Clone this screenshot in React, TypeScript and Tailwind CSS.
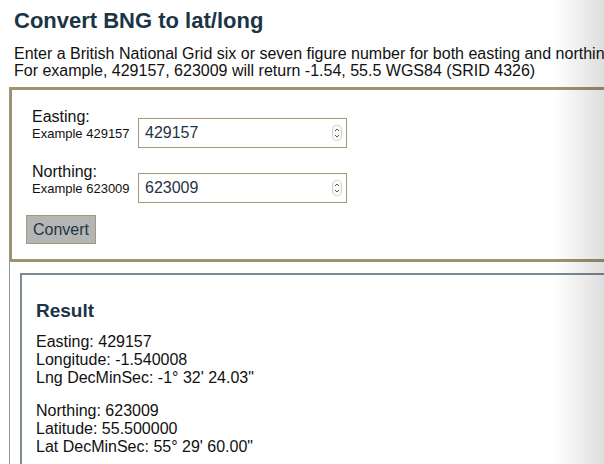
import { useState } from "react";

function Spinner() {
  return (
    <svg width="10" height="17" viewBox="0 0 10 17" className="absolute right-[5px] top-1/2 -translate-y-1/2">
      <rect x="0.5" y="0.5" width="9" height="16" rx="4.5" fill="#fafafa" stroke="#cfcfcf" />
      <path d="M3 6.5 L5 4.5 L7 6.5" fill="none" stroke="#555" strokeWidth="1" />
      <path d="M3 10.5 L5 12.5 L7 10.5" fill="none" stroke="#555" strokeWidth="1" />
    </svg>
  );
}

interface FieldProps {
  label: string;
  example: string;
  value: string;
  onChange: (v: string) => void;
}

function Field({ label, example, value, onChange }: FieldProps) {
  return (
    <div className="flex items-end pl-[6px]">
      <div className="pb-[6px] w-[106px]">
        <div className="text-[16px] leading-[18px]">{label}</div>
        <div className="text-[13px] leading-[16px]">{example}</div>
      </div>
      <div className="relative">
        <input
          type="text"
          value={value}
          onChange={(e) => onChange(e.target.value)}
          className="w-[209px] h-[30px] border border-[#a39a7a] pl-[6px] text-[16px] text-[#1f3543] outline-none"
        />
        <Spinner />
      </div>
    </div>
  );
}

export default function App() {
  const [easting, setEasting] = useState("429157");
  const [northing, setNorthing] = useState("623009");

  return (
    <div className="relative w-[604px] h-[464px] overflow-hidden bg-white text-[#111] font-['Liberation_Sans',Arial,sans-serif]">
      <div className="w-[760px]">
        <h1 className="pl-[14px] pt-[8px] text-[22px] leading-[26px] font-bold text-[#1b3545]">
          Convert BNG to lat/long
        </h1>
        <p className="pl-[14px] mt-[11px] text-[16px] leading-[17px] whitespace-nowrap">
          Enter a British National Grid six or seven figure number for both easting and northing.
          <br />
          For example, 429157, 623009 will return -1.54, 55.5 WGS84 (SRID 4326)
        </p>

        <form
          onSubmit={(e) => e.preventDefault()}
          className="ml-[9px] mt-[8px] border-[3px] border-[#9d9272] pl-[14px] pt-[18px] pb-[15px]"
        >
          <Field label="Easting:" example="Example 429157" value={easting} onChange={setEasting} />
          <div className="mt-[15px]">
            <Field label="Northing:" example="Example 623009" value={northing} onChange={setNorthing} />
          </div>
          <button
            type="submit"
            className="mt-[12px] h-[29px] px-[6px] bg-[#b5b5b5] border border-[#a39a7a] text-[16px] text-[#1f3543]"
          >
            Convert
          </button>
        </form>

        <div className="ml-[9px] border-l border-[#8a969c] pl-[10px] pt-[11px] h-[240px]">
          <div className="border-2 border-[#7d8a92] pl-[14px] pt-[25px] h-[220px]">
            <h2 className="text-[19px] leading-[22px] font-bold text-[#1b3545]">Result</h2>
            <div className="mt-[11px] text-[16px] leading-[18px]">
              <div>Easting: 429157</div>
              <div>Longitude: -1.540008</div>
              <div>Lng DecMinSec: -1° 32' 24.03"</div>
            </div>
            <div className="mt-[15px] text-[16px] leading-[18px]">
              <div>Northing: 623009</div>
              <div>Latitude: 55.500000</div>
              <div>Lat DecMinSec: 55° 29' 60.00"</div>
            </div>
          </div>
        </div>
      </div>
      <div className="pointer-events-none absolute right-0 top-0 h-full w-[50px] bg-linear-to-r from-transparent to-[rgba(0,0,0,0.13)]" />
    </div>
  );
}
